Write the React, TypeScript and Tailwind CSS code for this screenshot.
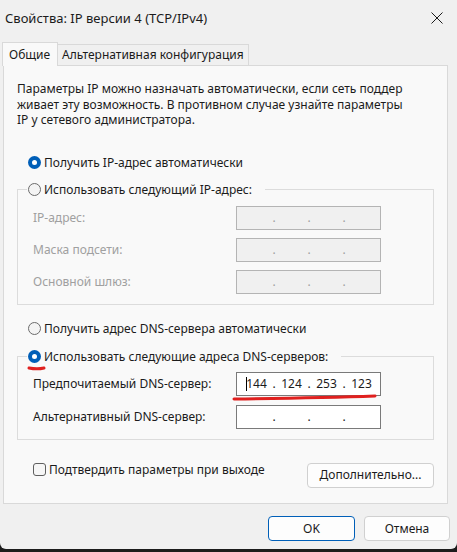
import React from "react";

const BLUE = "#005fb8";

function Radio({ checked }: { checked?: boolean }) {
  if (checked) {
    return (
      <span className="flex h-[13px] w-[13px] shrink-0 items-center justify-center rounded-full bg-[#005fb8]">
        <span className="h-[5px] w-[5px] rounded-full bg-white" />
      </span>
    );
  }
  return <span className="h-[13px] w-[13px] shrink-0 rounded-full border border-[#6b6b6b] bg-[#f4f4f4]" />;
}

function RadioRow({ checked, label }: { checked?: boolean; label: string }) {
  return (
    <div className="flex h-[16px] items-center gap-[3px]">
      <Radio checked={checked} />
      <span className="whitespace-nowrap">{label}</span>
    </div>
  );
}

// IP address box: four 29px cells split by dots
function IpBox({
  parts,
  disabled,
  caret,
}: {
  parts?: string[];
  disabled?: boolean;
  caret?: boolean;
}) {
  const cells = parts ?? ["", "", "", ""];
  return (
    <div
      className={
        disabled
          ? "relative flex h-[24px] w-[145px] items-center border border-[#b4b4b4] bg-[#f0f0f0] pl-[5px] text-[#a0a0a0]"
          : "relative flex h-[24px] w-[145px] items-center border border-[#7a7a7a] bg-white pl-[5px] text-[#1b1b1b]"
      }
    >
      {caret && <span className="absolute left-[9px] top-[4px] h-[14px] w-px bg-black" />}
      {cells.map((p, i) => (
        <React.Fragment key={i}>
          <span className="w-[29px] text-center">{p}</span>
          {i < 3 && <span className="w-[6px] text-center">.</span>}
        </React.Fragment>
      ))}
    </div>
  );
}

function FieldRow({
  label,
  disabled,
  children,
}: {
  label: string;
  disabled?: boolean;
  children: React.ReactNode;
}) {
  return (
    <div className="flex items-center">
      <span className={disabled ? "w-[203px] text-[#a0a0a0]" : "w-[203px]"}>{label}</span>
      {children}
    </div>
  );
}

export default function App() {
  return (
    <div className="h-[552px] w-[457px] bg-[#1c1c1c] font-['Segoe_UI','Noto_Sans',sans-serif] text-[12px] leading-[16px] text-[#1b1b1b]">
      <div className="flex h-[549px] flex-col rounded-b-[6px] bg-[#f0f0f0]">
        {/* title bar */}
        <div className="flex h-[36px] items-center justify-between pl-[5px] pr-[14px]">
          <span className="text-[13px]">Свойства: IP версии 4 (TCP/IPv4)</span>
          <svg width="12" height="12" viewBox="0 0 12 12" className="text-[#1b1b1b]">
            <path d="M0.5 0.5 L11.5 11.5 M11.5 0.5 L0.5 11.5" stroke="currentColor" strokeWidth="1" />
          </svg>
        </div>

        {/* tabs */}
        <div className="mt-[6px] flex h-[23px] items-end pl-[2px]">
          <div className="relative z-10 -mb-px flex h-[24px] w-[56px] items-center border border-b-0 border-[#d9d9d9] bg-[#f9f9f9] pl-[6px]">
            Общие
          </div>
          <div className="flex h-[21px] w-[191px] items-center border-r border-t border-[#d9d9d9] bg-[#f0f0f0] pl-[4px]">
            Альтернативная конфигурация
          </div>
        </div>

        {/* page */}
        <div className="ml-[3px] flex h-[439px] w-[445px] flex-col border border-[#d9d9d9] bg-[#f9f9f9] px-[13px] pt-[15px]">
          <p className="leading-[15.5px]">
            Параметры IP можно назначать автоматически, если сеть поддер
            <br />
            живает эту возможность. В противном случае узнайте параметры
            <br />
            IP у сетевого администратора.
          </p>

          <div className="ml-[11px] mt-[27px]">
            <RadioRow checked label="Получить IP-адрес автоматически" />
          </div>

          <fieldset className="mt-[11px] w-[417px] border border-[#dcdcdc]">
            <legend className="ml-[9px] pl-[1px] pr-[13px]">
              <RadioRow label="Использовать следующий IP-адрес:" />
            </legend>
            <div className="flex flex-col gap-[8px] pb-[10px] pl-[15px] pt-[8px]">
              <FieldRow label="IP-адрес:" disabled>
                <IpBox disabled />
              </FieldRow>
              <FieldRow label="Маска подсети:" disabled>
                <IpBox disabled />
              </FieldRow>
              <FieldRow label="Основной шлюз:" disabled>
                <IpBox disabled />
              </FieldRow>
            </div>
          </fieldset>

          <div className="ml-[11px] mt-[16px]">
            <RadioRow label="Получить адрес DNS-сервера автоматически" />
          </div>

          <fieldset className="mt-[12px] w-[417px] border border-[#dcdcdc]">
            <legend className="relative ml-[9px] pl-[1px] pr-[13px]">
              <RadioRow checked label="Использовать следующие адреса DNS-серверов:" />
              <svg width="20" height="6" viewBox="0 0 20 6" className="absolute left-0 top-[16px] overflow-visible">
                <path d="M2 3 C 7 4, 13 4, 17 3" stroke="#e0201f" strokeWidth="3" strokeLinecap="round" fill="none" />
              </svg>
            </legend>
            <div className="flex flex-col gap-[9px] pb-[10px] pl-[15px] pt-[7px]">
              <FieldRow label="Предпочитаемый DNS-сервер:">
                <div className="relative">
                  <IpBox parts={["144", "124", "253", "123"]} caret />
                  <svg width="150" height="8" viewBox="0 0 150 8" className="absolute left-[-4px] top-[22px] overflow-visible">
                    <path d="M2 5 C 40 4.5, 100 3.5, 143 2" stroke="#e0201f" strokeWidth="3" strokeLinecap="round" fill="none" />
                  </svg>
                </div>
              </FieldRow>
              <FieldRow label="Альтернативный DNS-сервер:">
                <IpBox />
              </FieldRow>
            </div>
          </fieldset>

          <div className="mt-[22px] flex items-start justify-between">
            <div className="ml-[16px] flex h-[16px] items-center gap-[3px]">
              <span className="h-[13px] w-[13px] rounded-[3px] border border-[#5f5f5f] bg-[#f6f6f6]" />
              <span>Подтвердить параметры при выходе</span>
            </div>
            <button className="mt-[1px] flex h-[25px] w-[127px] items-center justify-center rounded-[4px] border border-[#d0d0d0] bg-[#fdfdfd]">
              Дополнительно...
            </button>
          </div>
        </div>

        {/* dialog buttons */}
        <div className="mt-[12px] flex justify-end gap-[9px] pr-[7px]">
          <button
            className="flex h-[25px] w-[87px] items-center justify-center rounded-[4px] border bg-[#fdfdfd]"
            style={{ borderColor: BLUE }}
          >
            OK
          </button>
          <button className="flex h-[25px] w-[86px] items-center justify-center rounded-[4px] border border-[#d0d0d0] bg-[#fdfdfd]">
            Отмена
          </button>
        </div>
      </div>
    </div>
  );
}
